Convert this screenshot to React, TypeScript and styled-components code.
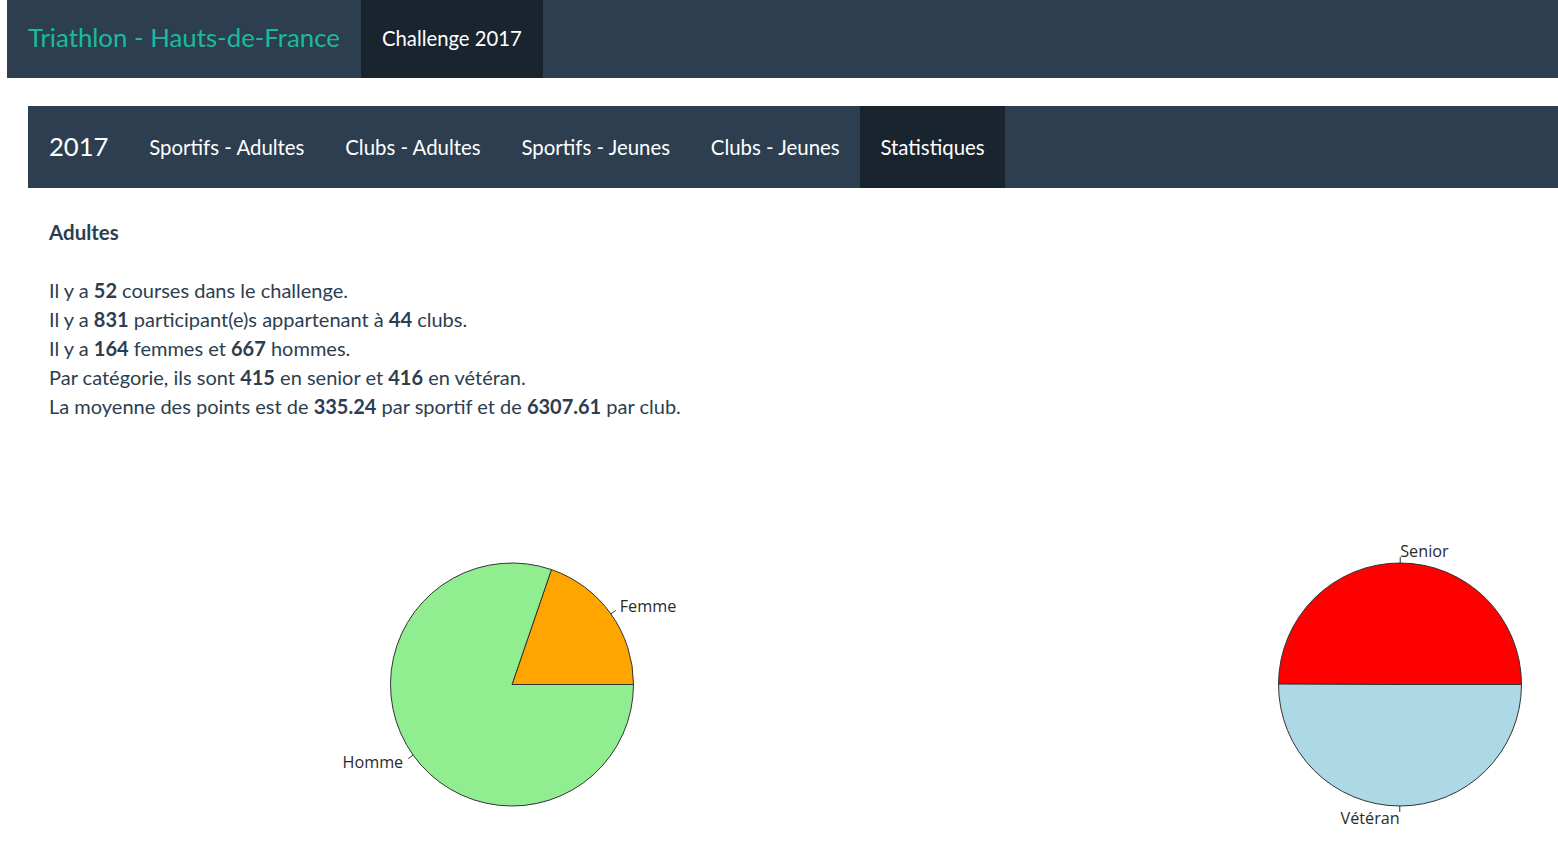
import React from "react";
import styled, { createGlobalStyle } from "styled-components";

const GlobalStyle = createGlobalStyle`
  html, body {
    margin: 0;
    padding: 0;
    background: #ffffff;
    overflow-x: hidden;
  }
  body {
    font-family: Lato, "Liberation Sans", sans-serif;
    color: #2c3e50;
  }
`;

const Page = styled.div`
  width: 1558px;
`;

const TopBar = styled.nav`
  margin-left: 7px;
  height: 78px;
  background: #2c3e50;
  display: flex;
  align-items: stretch;
`;

const TopBrand = styled.a`
  display: flex;
  align-items: center;
  padding: 0 21px 5px 21px;
  font-size: 25.8px;
  color: #18bc9c;
  text-decoration: none;
  white-space: nowrap;
`;

const TopLink = styled.a<{ $active?: boolean }>`
  display: flex;
  align-items: center;
  padding: 0 21px 3px 21px;
  font-size: 20.3px;
  color: #ffffff;
  text-decoration: none;
  white-space: nowrap;
  background: ${(p) => (p.$active ? "#1a242f" : "transparent")};
`;

const Container = styled.div`
  margin: 28px 0 0 28px;
`;

const SubBar = styled.nav`
  height: 82px;
  background: #2c3e50;
  display: flex;
  align-items: stretch;
`;

const SubBrand = styled.a`
  display: flex;
  align-items: center;
  padding: 0 20.5px 2px 21px;
  font-size: 25.6px;
  color: #ffffff;
  text-decoration: none;
`;

const SubLink = styled.a<{ $active?: boolean }>`
  display: flex;
  align-items: center;
  padding: 0 20.4px;
  font-size: 20.4px;
  color: #ffffff;
  text-decoration: none;
  white-space: nowrap;
  background: ${(p) => (p.$active ? "#1a242f" : "transparent")};
`;

const Content = styled.section`
  padding-left: 21px;
`;

const Heading = styled.h4`
  margin: 34px 0 0 0;
  font-size: 20.5px;
  line-height: 21.45px;
  font-weight: 700;
  color: #2c3e50;
`;

const Stats = styled.div`
  margin-top: 32.5px;
  font-size: 20px;
  line-height: 29px;
  color: #2c3e50;
`;

const Line = styled.div``;

const Num = styled.b`
  font-weight: 700;
`;

const Charts = styled.div`
  margin-top: 99px;
  display: grid;
  grid-template-columns: 968px 562px;
`;

const ChartSvg = styled.svg`
  display: block;
  height: 330px;
  overflow: visible;
`;

const Label = styled.text`
  font-family: "Open Sans", "DejaVu Sans", sans-serif;
  font-size: 16.2px;
  fill: #2a2a2a;
`;

type Slice = { label: string; value: number; color: string; anchor: "start" | "end"; dx: number; dy: number };

const R = 121.5;

function Pie({ cx, cy, slices, width }: { cx: number; cy: number; slices: Slice[]; width: number }) {
  const total = slices.reduce((s, x) => s + x.value, 0);
  let a0 = 0;
  const pt = (a: number, r: number) => [cx + r * Math.cos(a), cy - r * Math.sin(a)];
  return (
    <ChartSvg width={width} viewBox={`0 0 ${width} 330`}>
      {slices.map((s) => {
        const a1 = a0 + (s.value / total) * Math.PI * 2;
        const [x0, y0] = pt(a0, R);
        const [x1, y1] = pt(a1, R);
        const large = a1 - a0 > Math.PI ? 1 : 0;
        const mid = (a0 + a1) / 2;
        const [tx0, ty0] = pt(mid, R);
        const [tx1, ty1] = pt(mid, R + 6);
        a0 = a1;
        return (
          <g key={s.label}>
            <path
              d={`M${cx},${cy} L${x0},${y0} A${R},${R} 0 ${large} 0 ${x1},${y1} Z`}
              fill={s.color}
              stroke="#333"
              strokeWidth={1}
            />
            <line x1={tx0} y1={ty0} x2={tx1} y2={ty1} stroke="#333" strokeWidth={1} />
            <Label x={tx1 + s.dx} y={ty1 + s.dy} textAnchor={s.anchor}>
              {s.label}
            </Label>
          </g>
        );
      })}
    </ChartSvg>
  );
}

export default function App() {
  return (
    <Page>
      <GlobalStyle />
      <TopBar>
        <TopBrand>Triathlon - Hauts-de-France</TopBrand>
        <TopLink $active>Challenge 2017</TopLink>
      </TopBar>
      <Container>
        <SubBar>
          <SubBrand>2017</SubBrand>
          <SubLink>Sportifs - Adultes</SubLink>
          <SubLink>Clubs - Adultes</SubLink>
          <SubLink>Sportifs - Jeunes</SubLink>
          <SubLink>Clubs - Jeunes</SubLink>
          <SubLink $active>Statistiques</SubLink>
        </SubBar>
        <Content>
          <Heading>Adultes</Heading>
          <Stats>
            <Line>
              Il y a <Num>52</Num> courses dans le challenge.
            </Line>
            <Line>
              Il y a <Num>831</Num> participant(e)s appartenant à <Num>44</Num> clubs.
            </Line>
            <Line>
              Il y a <Num>164</Num> femmes et <Num>667</Num> hommes.
            </Line>
            <Line>
              Par catégorie, ils sont <Num>415</Num> en senior et <Num>416</Num> en vétéran.
            </Line>
            <Line>
              La moyenne des points est de <Num>335.24</Num> par sportif et de <Num>6307.61</Num> par club.
            </Line>
          </Stats>
        </Content>
        <Charts>
          <Pie
            cx={484}
            cy={164.5}
            width={968}
            slices={[
              { label: "Femme", value: 164, color: "#ffa500", anchor: "start", dx: 4, dy: 2 },
              { label: "Homme", value: 667, color: "#90ee90", anchor: "end", dx: -5, dy: 9 },
            ]}
          />
          <Pie
            cx={404}
            cy={164.5}
            width={562}
            slices={[
              { label: "Senior", value: 415, color: "#ff0000", anchor: "start", dx: 0, dy: 0 },
              { label: "Vétéran", value: 416, color: "#add8e6", anchor: "end", dx: 0, dy: 12 },
            ]}
          />
        </Charts>
      </Container>
    </Page>
  );
}
